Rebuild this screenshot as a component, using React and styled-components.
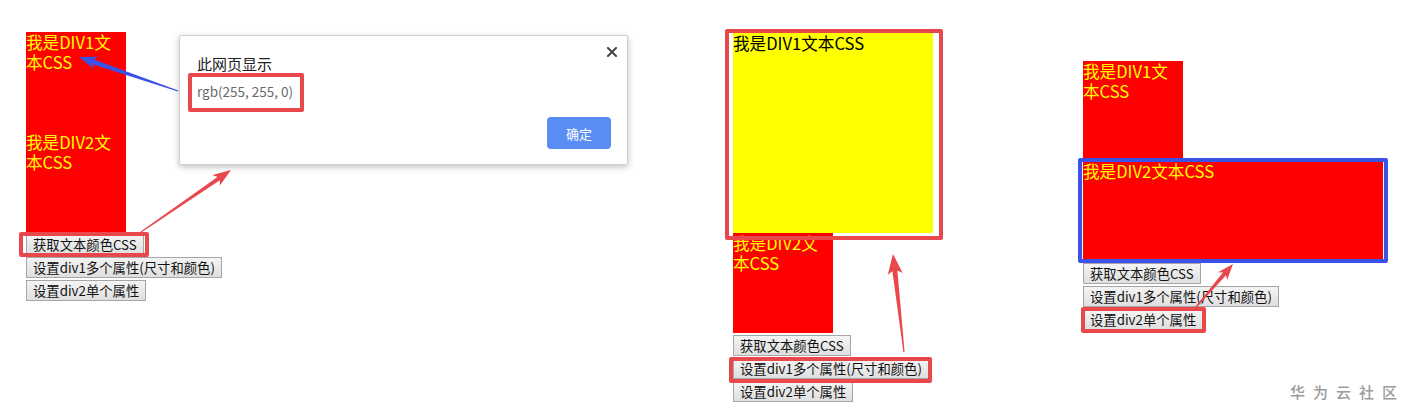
import React from 'react'
import styled, { createGlobalStyle, css } from 'styled-components'

const GlobalStyle = createGlobalStyle`
  body {
    margin: 0;
    background: #ffffff;
    font-family: "Noto Sans CJK SC", "Noto Sans", sans-serif;
  }
`

const RED = '#e8474c'
const BLUE = '#3b52e8'

// annotation frame drawn over an element, insets in px (negative = outside)
const mark = css`
  ${(p) =>
    p.$mark &&
    css`
      &::after {
        content: '';
        position: absolute;
        top: ${p.$mark.t}px;
        right: ${p.$mark.r}px;
        bottom: ${p.$mark.b}px;
        left: ${p.$mark.l}px;
        border: 4px solid ${p.$mark.color || RED};
        border-radius: 2px;
        pointer-events: none;
        z-index: 5;
      }
    `}
`

const Page = styled.div`
  position: relative;
  width: 1411px;
  height: 418px;
  overflow: hidden;
  display: flex;
  align-items: flex-start;
  padding-left: 26px;
  box-sizing: border-box;
`

const Panel = styled.div`
  position: relative;
  width: ${(p) => p.$width}px;
  padding-top: ${(p) => p.$top}px;
  flex-shrink: 0;
`

const Column = styled.div`
  display: flex;
  flex-direction: column;
  align-items: flex-start;
`

const Box = styled.div`
  position: relative;
  width: ${(p) => p.$w}px;
  height: ${(p) => p.$h}px;
  background: ${(p) => p.$bg};
  color: ${(p) => p.$color};
  font-size: 16.6px;
  line-height: 20px;
  word-break: break-all;
  ${mark}
`

const Buttons = styled.div`
  display: flex;
  flex-direction: column;
  align-items: flex-start;
  gap: 2px;
  padding-top: 2px;
`

const Button = styled.button`
  position: relative;
  height: 21px;
  padding: 0 6px;
  border: 1px solid #a6a6a6;
  border-radius: 0;
  background: linear-gradient(#f4f4f4, #dfdfdf);
  color: #111;
  font-family: "Noto Sans CJK SC", sans-serif;
  font-size: 13.33px;
  line-height: 17px;
  white-space: nowrap;
  ${mark}
`

const Dialog = styled.div`
  position: absolute;
  left: 153px;
  top: 35px;
  width: 449px;
  box-sizing: border-box;
  padding: 18px 16px 15px 17px;
  background: #fff;
  border: 1px solid #d0d0d0;
  border-radius: 2px;
  box-shadow: 0 2px 6px rgba(0, 0, 0, 0.25);
  display: flex;
  flex-direction: column;
  align-items: flex-start;
`

const DialogTitle = styled.div`
  font-size: 15px;
  line-height: 20px;
  color: #202124;
`

const Message = styled.span`
  position: relative;
  display: inline-block;
  margin-top: 8px;
  font-size: 13.5px;
  line-height: 18px;
  color: #6a6a6a;
  ${mark}
`

const Footer = styled.div`
  align-self: stretch;
  display: flex;
  justify-content: flex-end;
  margin-top: 17px;
`

const OkButton = styled.button`
  width: 64px;
  height: 32px;
  border: none;
  border-radius: 4px;
  background: #5a8df4;
  color: #fff;
  font-family: "Noto Sans CJK SC", sans-serif;
  font-size: 13px;
`

const Close = styled.div`
  position: absolute;
  top: 11px;
  right: 10px;
  width: 10px;
  height: 10px;
  display: flex;
`

const Overlay = styled.svg`
  position: absolute;
  left: 0;
  top: 0;
  pointer-events: none;
  z-index: 10;
`

const Watermark = styled.div`
  position: absolute;
  right: 6px;
  bottom: 16px;
  font-size: 15px;
  font-weight: 500;
  letter-spacing: 8px;
  color: #9b9b9b;
`

function arrowPoints(x1, y1, x2, y2, shaftW, headL, headW) {
  const len = Math.hypot(x2 - x1, y2 - y1)
  const dx = (x2 - x1) / len
  const dy = (y2 - y1) / len
  const nx = -dy
  const ny = dx
  const bx = x2 - dx * headL
  const by = y2 - dy * headL
  const wx = bx - dx * 3
  const wy = by - dy * 3
  const pts = [
    [x1 + nx * 0.6, y1 + ny * 0.6],
    [bx + nx * (shaftW / 2), by + ny * (shaftW / 2)],
    [wx + nx * (headW / 2), wy + ny * (headW / 2)],
    [x2, y2],
    [wx - nx * (headW / 2), wy - ny * (headW / 2)],
    [bx - nx * (shaftW / 2), by - ny * (shaftW / 2)],
    [x1 - nx * 0.6, y1 - ny * 0.6],
  ]
  return pts.map((p) => p.map((v) => v.toFixed(1)).join(',')).join(' ')
}

const arrows = [
  { from: [178, 91], to: [79, 57], w: 5, l: 15, h: 13, color: BLUE },
  { from: [141, 232], to: [231, 170], w: 4, l: 15, h: 13, color: RED },
  { from: [904, 352], to: [893, 254], w: 5, l: 17, h: 15, color: RED },
  { from: [1196, 307], to: [1233, 264], w: 4, l: 13, h: 12, color: RED },
]

function ButtonGroup({ marked }) {
  const labels = ['获取文本颜色CSS', '设置div1多个属性(尺寸和颜色)', '设置div2单个属性']
  return (
    <Buttons>
      {labels.map((label, i) => (
        <Button key={label} $mark={marked && marked.index === i ? marked.box : null}>
          {label}
        </Button>
      ))}
    </Buttons>
  )
}

export default function App() {
  return (
    <>
      <GlobalStyle />
      <Page>
        <Panel $width={707} $top={32}>
          <Column>
            <Box $w={100} $h={100} $bg="#ff0000" $color="#ffff00">我是DIV1文本CSS</Box>
            <Box $w={100} $h={100} $bg="#ff0000" $color="#ffff00">我是DIV2文本CSS</Box>
            <ButtonGroup marked={{ index: 0, box: { t: -3, r: -6, b: -3, l: -8 } }} />
          </Column>
          <Dialog>
            <DialogTitle>此网页显示</DialogTitle>
            <Message $mark={{ t: -9, r: -11, b: -12, l: -9 }}>rgb(255, 255, 0)</Message>
            <Footer>
              <OkButton>确定</OkButton>
            </Footer>
            <Close>
              <svg width="10" height="10" viewBox="0 0 10 10">
                <path d="M1 1 L9 9 M9 1 L1 9" stroke="#444" strokeWidth="2" strokeLinecap="square" />
              </svg>
            </Close>
          </Dialog>
        </Panel>

        <Panel $width={350} $top={33}>
          <Column>
            <Box $w={200} $h={200} $bg="#ffff00" $color="#000" $mark={{ t: -4, r: -10, b: -7, l: -8 }}>
              我是DIV1文本CSS
            </Box>
            <Box $w={100} $h={100} $bg="#ff0000" $color="#ffff00">我是DIV2文本CSS</Box>
            <ButtonGroup marked={{ index: 1, box: { t: -2, r: -4, b: -5, l: -5 } }} />
          </Column>
        </Panel>

        <Panel $width={320} $top={61}>
          <Column>
            <Box $w={100} $h={100} $bg="#ff0000" $color="#ffff00">我是DIV1文本CSS</Box>
            <Box
              $w={300}
              $h={100}
              $bg="#ff0000"
              $color="#ffff00"
              $mark={{ t: -3, r: -5, b: -2, l: -5, color: BLUE }}
            >
              我是DIV2文本CSS
            </Box>
            <ButtonGroup marked={{ index: 2, box: { t: -3, r: -4, b: -4, l: -3 } }} />
          </Column>
        </Panel>

        <Overlay width="1411" height="418" viewBox="0 0 1411 418">
          {arrows.map((a, i) => (
            <polygon
              key={i}
              points={arrowPoints(a.from[0], a.from[1], a.to[0], a.to[1], a.w, a.l, a.h)}
              fill={a.color}
            />
          ))}
        </Overlay>

        <Watermark>华为云社区</Watermark>
      </Page>
    </>
  )
}
